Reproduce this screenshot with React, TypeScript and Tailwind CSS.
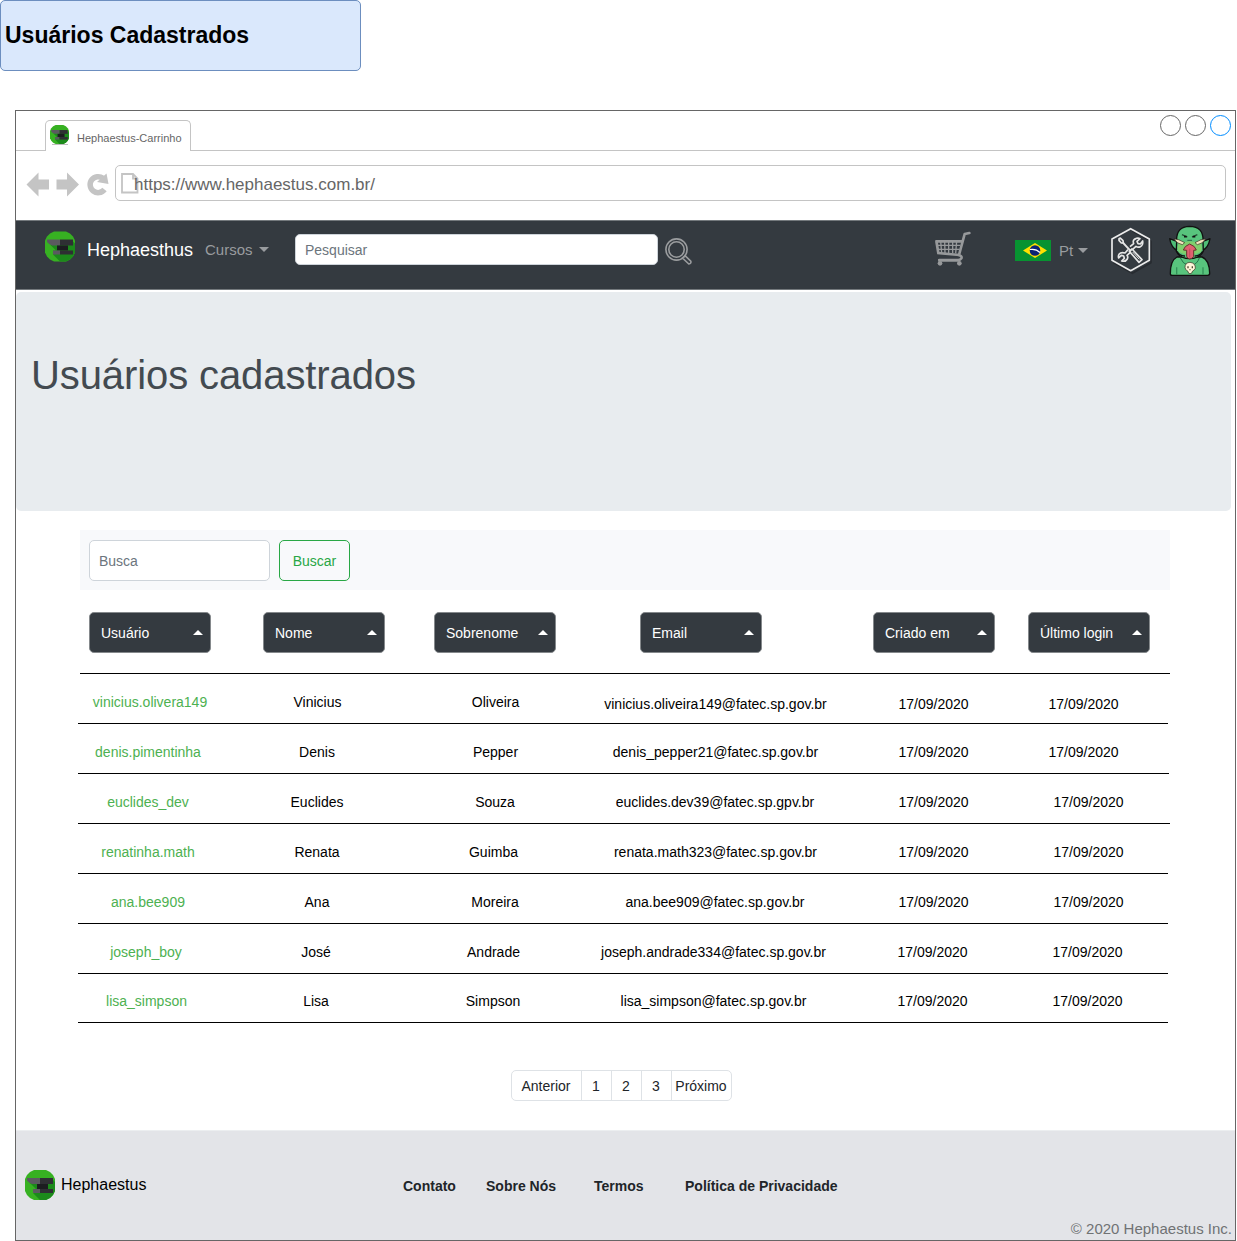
import React from "react";

function AnvilLogo({ className }: { className: string }) {
  return (
    <svg viewBox="0 0 30 30" className={className}>
      <path d="M9 0H21L25 2L28 5L30 9V21L28 25L25 28L21 30H9L5 28L2 25L0 21V9L2 5L5 2Z" fill="#37b122" />
      <path d="M28 10L30 12V21L28 25L25 28L21 30H15L8 23V19H11L5 13H28Z" fill="#1c8a1b" />
      <path d="M2 8H15V14H7Q4 13 2 10.5Z" fill="#5a5a5f" />
      <path d="M15 8H28V14H15Z" fill="#2e2f33" />
      <path d="M12 14H23V19H12Z" fill="#1c1d20" />
      <path d="M8 19H15V23H8Z" fill="#5a5a5f" />
      <path d="M15 19H28V23H15Z" fill="#2e2f33" />
    </svg>
  );
}

function Caret({ up = false, className }: { up?: boolean; className: string }) {
  return (
    <svg viewBox="0 0 10 5" className={className}>
      <path d={up ? "M0 5L5 0L10 5Z" : "M0 0L5 5L10 0Z"} fill="currentColor" />
    </svg>
  );
}

function CartIcon() {
  return (
    <svg viewBox="42 32 111 105" className="h-[35px] w-[37px]" fill="none" stroke="#97999b">
      <path d="M148 38L134 41L117 104Q127 108 124 114Q121 119 114 119H58" strokeWidth="8" strokeLinecap="round" strokeLinejoin="round" />
      <path d="M46 63H126M49 62L55 98L118 104" strokeWidth="8" />
      <path d="M62 62L65 99M74 62L75 99M86 62L86 99M98 62L98 99M110 62L107 99M49 75H121M51 87H118" strokeWidth="4" />
      <path d="M55 120H120" strokeWidth="8" />
      <circle cx="60" cy="129" r="7" fill="#97999b" stroke="none" />
      <circle cx="118" cy="129" r="7" fill="#97999b" stroke="none" />
    </svg>
  );
}

function BrazilFlag() {
  return (
    <svg viewBox="0 0 36 21" className="h-[21px] w-9">
      <path d="M0 0H36V21H0Z" fill="#079331" />
      <path d="M8 10.5L20 3L32 10.5L20 18Z" fill="#ffe000" />
      <circle cx="20" cy="10.5" r="5.3" fill="#0b2373" />
      <path d="M15 9.5Q21 8.5 25 12.5" stroke="#fff" strokeWidth="1.2" fill="none" />
    </svg>
  );
}

function ToolsIcon() {
  return (
    <svg viewBox="30 20 126 144" className="h-12 w-[42px]" fill="none" strokeLinejoin="round">
      <path d="M97 32L153 63V127L97 159L41 127" stroke="#282c31" strokeWidth="5" />
      <path d="M92 25L148 56V120L92 151L36 120V56Z" stroke="#ececec" strokeWidth="5" />
      <path d="M57 55L61 53L69 61L70 68L64 68L57 60Z" stroke="#e6e6e6" strokeWidth="5" />
      <path d="M68 66L93 93" stroke="#e6e6e6" strokeWidth="6" />
      <path d="M88 93L96 86L126 118L117 126Z" stroke="#e6e6e6" strokeWidth="5" />
      <path d="M98 95L118 117" stroke="#e6e6e6" strokeWidth="3" />
      <path d="M90 79L101 70Q96 58 109 54Q115 52 120 55L111 63L114 70L121 71L128 62Q130 75 121 79Q114 82 108 78L98 87" stroke="#e6e6e6" strokeWidth="5" />
      <path d="M84 88L75 98Q63 94 57 102Q54 107 56 113L64 105L71 107L73 114L65 122Q77 125 82 116Q85 110 81 105L91 96" stroke="#e6e6e6" strokeWidth="5" />
    </svg>
  );
}

function GoblinAvatar() {
  return (
    <svg viewBox="207 12 126 156" className="h-[52px] w-[42px]" strokeLinejoin="round">
      <path d="M231 108Q211 118 211 158Q211 163 217 163H323Q329 163 329 157Q328 116 306 108Z" fill="#58c47d" stroke="#111" strokeWidth="4" />
      <path d="M230 161V139M309 161V139" stroke="#35905a" strokeWidth="4" />
      <path d="M232 62L209 53Q214 82 233 89ZM307 62L330 53Q325 82 306 89Z" fill="#4fbd77" stroke="#111" strokeWidth="4" />
      <path d="M230 60Q228 17 269 16Q311 17 309 60L310 91Q300 112 269 113Q238 112 229 91Z" fill="#58c47d" stroke="#111" strokeWidth="4" />
      <path d="M246 41L262 48M292 41L276 48" stroke="#234c35" strokeWidth="4" />
      <path d="M252 47H260M278 47H286" stroke="#111" strokeWidth="5" />
      <path d="M262 58H276" stroke="#286c46" strokeWidth="3" />
      <path d="M236 68Q269 53 303 68Q309 81 302 93Q269 111 237 93Q229 80 236 68Z" fill="#80cf6d" />
      <path d="M231 91Q240 106 255 105M308 91Q298 106 284 105" fill="none" stroke="#111" strokeWidth="4" />
      <path d="M222 54Q235 53 254 65L247 71Q232 69 222 54ZM317 54Q304 53 285 65L292 71Q307 69 317 54Z" fill="#f5e8bf" stroke="#2b2419" strokeWidth="2" />
      <path d="M250 87Q253 75 269 69Q286 75 289 87L281 88L281 107Q275 114 269 114Q261 113 260 106L260 88Z" fill="#df6170" stroke="#64332c" strokeWidth="3" />
      <path d="M269 83V109" stroke="#b63f55" strokeWidth="2" />
      <path d="M241 111Q250 130 263 132M298 111Q291 130 277 132" fill="none" stroke="#23764b" strokeWidth="3" />
      <path d="M270 124Q287 126 286 142Q282 149 277 151Q277 158 270 158Q264 158 264 151Q255 147 255 139Q255 125 270 124Z" fill="#fff5d8" stroke="#34291c" strokeWidth="2" />
      <path d="M264 136V142M277 136V142M270 145V148" stroke="#4e4432" strokeWidth="4" />
    </svg>
  );
}

function SearchIcon() {
  return (
    <svg viewBox="0 0 27 27" className="h-[27px] w-[27px]" fill="none" stroke="#9b9d9f" strokeWidth="1.6">
      <circle cx="11.5" cy="11.5" r="10.6" />
      <circle cx="11.5" cy="11.5" r="7.7" />
      <path d="M17.5 20L20 17.6L25.8 23.2Q26.5 25.6 23.8 26Z" />
    </svg>
  );
}

const headers = [
  { label: "Usuário", cell: "ml-[73px]" },
  { label: "Nome", cell: "ml-[52px]" },
  { label: "Sobrenome", cell: "ml-[49px]" },
  { label: "Email", cell: "ml-[84px]" },
  { label: "Criado em", cell: "ml-[111px]" },
  { label: "Último login", cell: "ml-[33px]" },
];

const rows = [
  { values: ["vinicius.olivera149", "Vinicius", "Oliveira", "vinicius.oliveira149@fatec.sp.gov.br", "17/09/2020", "17/09/2020"], rule: "ml-1 w-[1090px]", cols: "grid-cols-[148px_187px_169px_271px_165px_135px]", lower: true },
  { values: ["denis.pimentinha", "Denis", "Pepper", "denis_pepper21@fatec.sp.gov.br", "17/09/2020", "17/09/2020"], rule: "ml-0.5 w-[1090px]", cols: "grid-cols-[144px_194px_163px_277px_159px_141px]" },
  { values: ["euclides_dev", "Euclides", "Souza", "euclides.dev39@fatec.sp.gpv.br", "17/09/2020", "17/09/2020"], rule: "ml-0.5 w-[1091px]", cols: "grid-cols-[144px_194px_162px_278px_159px_151px]" },
  { values: ["renatinha.math", "Renata", "Guimba", "renata.math323@fatec.sp.gov.br", "17/09/2020", "17/09/2020"], rule: "ml-0.5 w-[1092px]", cols: "grid-cols-[144px_194px_159px_285px_151px_159px]" },
  { values: ["ana.bee909", "Ana", "Moreira", "ana.bee909@fatec.sp.gov.br", "17/09/2020", "17/09/2020"], rule: "ml-0.5 w-[1090px]", cols: "grid-cols-[144px_194px_162px_278px_159px_151px]" },
  { values: ["joseph_boy", "José", "Andrade", "joseph.andrade334@fatec.sp.gov.br", "17/09/2020", "17/09/2020"], rule: "ml-0.5 w-[1090px]", cols: "grid-cols-[140px_200px_155px_285px_153px_157px]" },
  { values: ["lisa_simpson", "Lisa", "Simpson", "lisa_simpson@fatec.sp.gov.br", "17/09/2020", "17/09/2020"], rule: "ml-0.5 w-[1090px]", cols: "grid-cols-[141px_198px_156px_285px_153px_157px]", last: true },
];

function BrowserChrome() {
  return (
    <>
      <div className="flex h-10 items-end">
        <div className="h-10 w-[29px] border-b border-[#c4c4c4]" />
        <div className="flex h-[31px] w-[146px] rounded-t-[5px] border border-b-0 border-[#c4c4c4]">
          <div className="mt-1 ml-1 h-5 w-[19px]">
            <AnvilLogo className="h-[19px] w-[19px]" />
            <div className="mx-auto h-px w-4 bg-[#bdbdbd]" />
          </div>
          <span className="mt-[11px] ml-2 text-[11px] leading-[13px] text-[#666]">Hephaestus-Carrinho</span>
        </div>
        <div className="flex h-10 flex-1 justify-end gap-1 border-b border-[#c4c4c4] pt-1 pr-1">
          <div className="h-[21px] w-[21px] rounded-full border border-[#666]" />
          <div className="h-[21px] w-[21px] rounded-full border border-[#666]" />
          <div className="h-[21px] w-[21px] rounded-full border border-[#008cff]" />
        </div>
      </div>
      <div className="flex h-[69px] pt-3.5">
        <svg viewBox="0 0 84 26" className="mt-1.5 ml-2.5 h-[26px] w-[84px]" fill="#c4c4c4">
          <path d="M0.5 13.5L12.5 1.5V8.5H23V18.5H12.5V25.5Z" />
          <path d="M53 13.5L41 1.5V8.5H30.5V18.5H41V25.5Z" />
          <path d="M78.5 18.5A8 8 0 1 1 77 7.3" fill="none" stroke="#c4c4c4" strokeWidth="5.5" />
          <path d="M71 11L80.5 2.5L82.5 13Z" />
        </svg>
        <div className="ml-[5px] flex h-9 w-[1111px] rounded-[5px] border border-[#c4c4c4]">
          <svg viewBox="0 0 18 21" className="mt-[7px] ml-[5px] h-[21px] w-[18px] shrink-0" fill="none" stroke="#c4c4c4" strokeWidth="1.8">
            <path d="M1 1H12L16.5 5.5V19.5H1ZM12 1V5.5H16.5" />
          </svg>
          <span className="-ml-[5px] pt-[9px] text-[17px] leading-5 text-[#666]">https://www.hephaestus.com.br/</span>
        </div>
      </div>
    </>
  );
}

function Navbar() {
  return (
    <nav className="flex h-[70px] border-y border-[#74797d] bg-[#343a40]">
      <AnvilLogo className="mt-2.5 ml-[29px] h-[31px] w-[30px] shrink-0" />
      <span className="mt-[19px] ml-3 w-[118px] text-lg leading-5 text-white">Hephaesthus</span>
      <span className="mt-[19px] w-[53px] text-[15px] leading-5 text-[#999c9f]">Cursos</span>
      <Caret className="mt-[26px] ml-px h-[5px] w-[10px] text-[#999c9f]" />
      <div className="mt-[13px] ml-[26px] h-[31px] w-[363px] rounded-[5px] border border-[#ced4da] bg-white pt-[5px] pl-[9px] text-sm leading-5 text-[#6c757d]">Pesquisar</div>
      <div className="mt-[17px] ml-[7px]"><SearchIcon /></div>
      <div className="mt-2.5 ml-[242px]"><CartIcon /></div>
      <div className="mt-[19px] ml-11"><BrazilFlag /></div>
      <span className="mt-5 ml-2 w-[19px] text-[15px] leading-5 text-[#999c9f]">Pt</span>
      <Caret className="mt-[27px] h-[5px] w-[10px] text-[#999c9f]" />
      <div className="mt-1.5 ml-[22px]"><ToolsIcon /></div>
      <div className="mt-1 ml-[17px]"><GoblinAvatar /></div>
    </nav>
  );
}

function UserTable() {
  return (
    <div>
      <div className="mt-[22px] flex">
        {headers.map((h) => (
          <div key={h.label} className={`flex h-[41px] w-[122px] shrink-0 justify-between rounded-[5px] border border-[#85898c] bg-[#343a40] pt-[11px] pr-[7px] pl-[11px] text-sm leading-[18px] text-white ${h.cell}`}>
            <span>{h.label}</span>
            <Caret up className="mt-1.5 h-[5px] w-[10px]" />
          </div>
        ))}
      </div>
      <div className="mt-5 ml-[60px]">
        {rows.map((row) => (
          <div key={row.values[0]} className={row.last ? "h-[49px]" : "h-[50px]"}>
            <div className={`h-px bg-black ${row.rule}`} />
            <div className={`grid text-center text-sm leading-4 text-black ${row.cols} ${row.last ? "pt-[19px]" : "pt-5"}`}>
              {row.values.map((value, i) => (
                <span key={i} className={`whitespace-nowrap ${i === 0 ? "text-[#4db151]" : ""} ${row.lower && i > 2 ? "pt-0.5" : ""}`}>{value}</span>
              ))}
            </div>
          </div>
        ))}
        <div className="ml-0.5 h-px w-[1090px] bg-black" />
      </div>
    </div>
  );
}

export default function App() {
  return (
    <div className="h-[1241px] w-[1237px] overflow-hidden bg-white font-['Liberation_Sans',Arial,sans-serif]">
      <header className="h-[71px] w-[361px] rounded-[5px] border border-[#6c8ebf] bg-[#dae8fc] pt-5 pl-1 text-[23px] leading-7 font-bold text-black">
        Usuários Cadastrados
      </header>
      <div className="mt-[39px] ml-[15px] flex h-[1131px] w-[1221px] flex-col border border-[#666]">
        <BrowserChrome />
        <Navbar />
        <section className="mt-0.5 h-[219px] w-[1215px] shrink-0 rounded-[5px] bg-[#e8ecef] pt-[59px] pl-[15px] text-[40px] leading-[48px] tracking-[-0.1px] text-[#434a50]">
          Usuários cadastrados
        </section>
        <div className="mt-[19px] ml-16 flex h-[60px] w-[1090px] gap-[9px] bg-[#f8f9fb] pt-2.5 pl-[9px] text-sm leading-5">
          <div className="h-[41px] w-[181px] rounded-[5px] border border-[#ced4da] bg-white pt-2.5 pl-[9px] text-[#6c757d]">Busca</div>
          <div className="h-[41px] w-[71px] rounded-[5px] border border-[#28a745] pt-2.5 text-center text-[#28a745]">Buscar</div>
        </div>
        <UserTable />
        <div className="mt-[47px] ml-[495px] flex h-[31px] w-[221px] shrink-0 divide-x divide-[#dee2e6] rounded-[5px] border border-[#dee2e6] text-center text-sm leading-[30px] text-[#212529]">
          <span className="w-[70px] pr-px">Anterior</span>
          <span className="w-[30px] pr-px">1</span>
          <span className="w-[30px] pr-px">2</span>
          <span className="w-[30px] pr-px">3</span>
          <span className="w-[59px] pr-px">Próximo</span>
        </div>
        <footer className="mt-[29px] flex flex-1 flex-col justify-between border-t border-[#eceef0] bg-[#e3e4e8]">
          <div className="mt-[39px] flex">
            <AnvilLogo className="ml-[9px] h-[30px] w-[30px]" />
            <span className="mt-[5px] ml-1.5 w-[325px] text-base leading-5 text-black">Hephaestus</span>
            <div className="mt-1.5 flex text-sm leading-5 font-bold text-[#212529]">
              <span className="ml-[17px] w-[83px]">Contato</span>
              <span className="w-[108px]">Sobre Nós</span>
              <span className="w-[91px]">Termos</span>
              <span>Política de Privacidade</span>
            </div>
          </div>
          <span className="mr-[3px] mb-0.5 self-end text-[15px] leading-[18px] text-[#707274]">© 2020 Hephaestus Inc.</span>
        </footer>
      </div>
    </div>
  );
}
